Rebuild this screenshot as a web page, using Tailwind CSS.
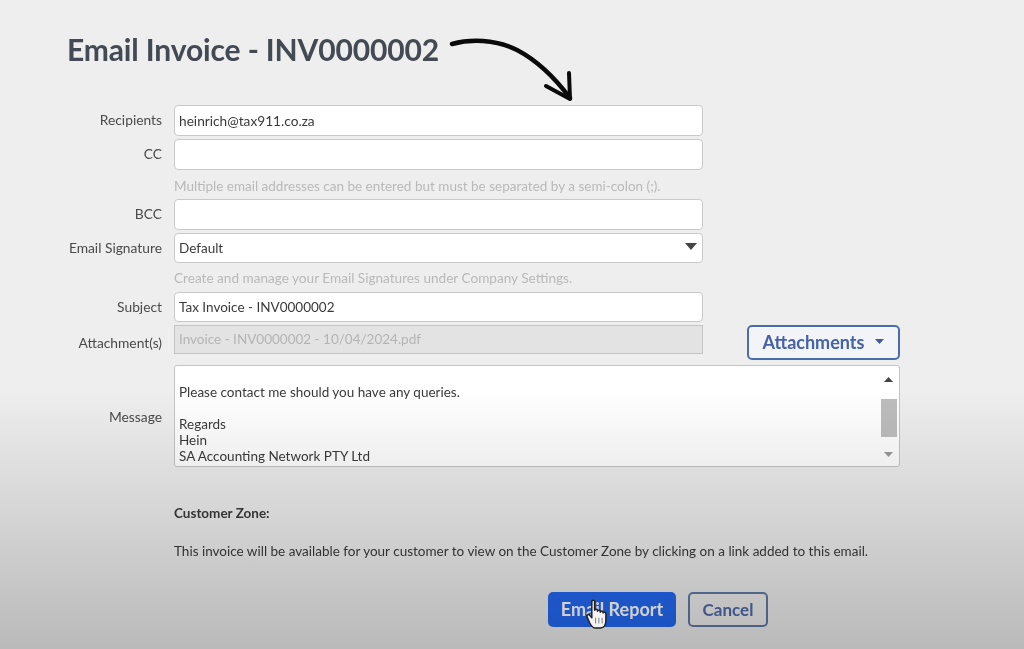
<!DOCTYPE html>
<html lang="en">
<head>
  <meta charset="UTF-8" />
  <meta name="viewport" content="width=device-width, initial-scale=1.0" />
  <title>Email Invoice - INV0000002</title>
  <script src="https://cdn.jsdelivr.net/npm/@tailwindcss/browser@4"></script>
</head>
<body class="bg-[#eeeeee] font-['Lato','Liberation_Sans',sans-serif] text-[#4a4a4a] overflow-hidden">
  <div class="relative w-[1024px] h-[649px] overflow-hidden">

    <main class="pl-[67px] pt-[31px] blur-[0.5px]">
      <h1 class="h-[36px] leading-[36px] text-[30px] font-bold tracking-[-0.14px] text-[#434a54]">Email Invoice - INV0000002</h1>

      <form class="mt-[38px] ml-[-67px] text-[13.5px]">
        <!-- Recipients -->
        <div class="flex gap-3 items-center">
          <label class="w-[162px] text-right text-[13.8px]">Recipients</label>
          <div class="w-[529px] h-[31px] leading-[30px] px-1 bg-white border border-[#c9c9c9] rounded-[4px] text-[13.7px] text-[#3a3a3a]">heinrich@tax911.co.za</div>
        </div>
        <div class="flex gap-3 items-center mt-[3px]">
          <label class="w-[162px] text-right text-[13.8px]">CC</label>
          <div class="w-[529px] h-[31px] bg-white border border-[#c9c9c9] rounded-[4px]"></div>
        </div>
        <p class="ml-[174px] mt-[7px] h-[22px] leading-[18px] text-[#b9b9b9]">Multiple email addresses can be entered but must be separated by a semi-colon (;).</p>

        <div class="flex gap-3 items-center">
          <label class="w-[162px] text-right text-[13.8px]">BCC</label>
          <div class="w-[529px] h-[31px] bg-white border border-[#c9c9c9] rounded-[4px]"></div>
        </div>
        <div class="flex gap-3 items-center mt-[3px]">
          <label class="w-[162px] text-right text-[13.8px]">Email Signature</label>
          <div class="w-[529px] h-[30px] px-1 flex items-center justify-between bg-white border border-[#c9c9c9] rounded-[4px] text-[#3a3a3a]">
            <span>Default</span>
            <svg class="w-[12px] h-[7px] mr-[1px] mb-[3px]" viewBox="0 0 12 7"><path d="M0 0h12L6 7z" fill="#444" /></svg>
          </div>
        </div>
        <p class="ml-[174px] mt-[6px] h-[23px] leading-[18px] text-[13.6px] text-[#b9b9b9]">Create and manage your Email Signatures under Company Settings.</p>

        <div class="flex gap-3 items-center">
          <label class="w-[162px] text-right text-[13.8px]">Subject</label>
          <div class="w-[529px] h-[30px] leading-[28px] px-1 bg-white border border-[#c9c9c9] rounded-[4px] text-[#3a3a3a]">Tax Invoice - INV0000002</div>
        </div>

        <!-- Attachments -->
        <div class="flex gap-3 items-start mt-[3px]">
          <label class="w-[162px] text-right text-[13.8px] mt-[8px]">Attachment(s)</label>
          <div class="w-[529px] h-[29px] leading-[27px] px-1 bg-[#e3e3e3] border border-[#c4c4c4] text-[#b4b4b4]">Invoice - INV0000002 - 10/04/2024.pdf</div>
          <button type="button" class="ml-[32px] w-[153px] h-[35px] flex items-center justify-center gap-[11px] bg-[#f2f4f7] border-2 border-[#4a6fa8] rounded-[5px] text-[18px] font-bold text-[#4561a8]">
            Attachments
            <svg class="w-[9px] h-[5px] mb-[2px]" viewBox="0 0 9 5"><path d="M0 0h9L4.500 5z" fill="#3f5a9c" /></svg>
          </button>
        </div>

        <!-- Message -->
        <div class="flex gap-3 items-center mt-[5px]">
          <label class="w-[162px] text-right text-[13.8px] pt-[3px]">Message</label>
          <div class="w-[726px] h-[102px] flex justify-between bg-white border border-[#c4c4c4] rounded-[3px] text-[#3a3a3a]">
            <div class="pl-1 pt-[18px] leading-[16px]">
              <p>Please contact me should you have any queries.</p>
              <p class="mt-[16px]">Regards</p>
              <p>Hein</p>
              <p>SA Accounting Network PTY Ltd</p>
            </div>
            <div class="w-[21px] pt-[11px] pb-[9px] flex flex-col items-center justify-between">
              <svg class="w-[9px] h-[5px]" viewBox="0 0 9 5"><path d="M0 5h9L4.500 0z" fill="#444" /></svg>
              <div class="w-[16px] h-[38px] mt-[2px] bg-[#bdbdbd]"></div>
              <svg class="w-[9px] h-[5px]" viewBox="0 0 9 5"><path d="M0 0h9L4.500 5z" fill="#999" /></svg>
            </div>
          </div>
        </div>

        <!-- Customer zone -->
        <div class="ml-[174px] mt-[37px]">
          <p class="font-bold h-[18px] leading-[18px] text-[#3a3a3a]">Customer Zone:</p>
          <p class="mt-[20px] h-[18px] leading-[18px] text-[#3a3a3a]">This invoice will be available for your customer to view on the Customer Zone by clicking on a link added to this email.</p>
        </div>

        <div class="flex gap-3 ml-[548px] mt-[32px]">
          <button type="button" class="w-[128px] h-[35px] bg-[#2368f2] rounded-[5px] text-[18px] font-bold text-white">Email Report</button>
          <button type="button" class="w-[80px] h-[35px] border-2 border-[#5f7aa6] rounded-[5px] text-[17px] font-bold text-[#4f68a8]">Cancel</button>
        </div>
      </form>
    </main>

    <!-- fade to grey over the lower half -->
    <div class="absolute inset-0 pointer-events-none bg-linear-to-b from-transparent from-[60%] to-black/[0.22]"></div>

    <!-- hand drawn arrow -->
    <svg class="absolute left-0 top-0 pointer-events-none" width="1024" height="120" viewBox="0 0 1024 120" fill="none">
      <path d="M452 44C470 39 495 39 517 50C540 62 558 82 570 98" stroke="#0a0a0a" stroke-width="4.500" stroke-linecap="round" />
      <path d="M569 73L570 99L546 86" stroke="#0a0a0a" stroke-width="4" stroke-linecap="round" stroke-linejoin="round" />
    </svg>

    <!-- hand cursor -->
    <svg class="absolute left-[585px] top-[599px] pointer-events-none" width="23" height="31" viewBox="0 0 24 33">
      <path d="M7 2.500C7 1 10 1 10 2.500V12C10 10.500 13 10.500 13 12V13C13 11.500 16 11.500 16 13V14C16 12.500 19 12.500 19 14V15C19 13.500 22 14 22 15.500V23C22 27 20 31 16 31H11C8 31 6 28 4.500 25L2 19C1 17 3.500 15.500 5 17.500L7 20Z" fill="#f4f4f4" stroke="#222" stroke-width="1.600" stroke-linejoin="round" />
      <path d="M11 20V26M14.500 20V26M18 20V26" stroke="#777" stroke-width="1" />
    </svg>
  </div>
</body>
</html>
